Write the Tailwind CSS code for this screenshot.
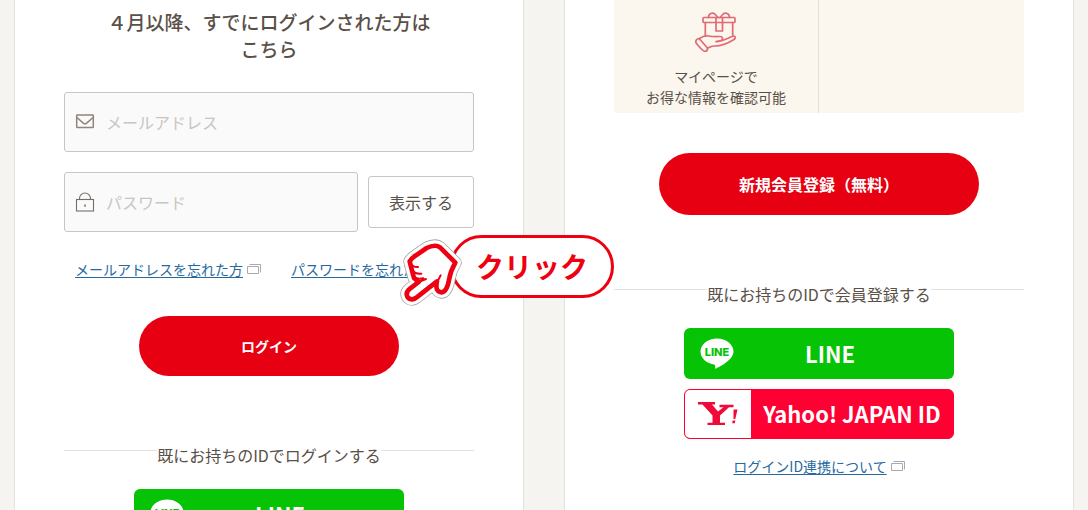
<!DOCTYPE html>
<html lang="ja">
<head>
  <meta charset="UTF-8" />
  <meta name="viewport" content="width=device-width, initial-scale=1.0" />
  <title>ログイン・新規会員登録</title>
  <script src="https://cdn.jsdelivr.net/npm/@tailwindcss/browser@4"></script>
</head>
<body class="relative h-screen overflow-hidden bg-[#f5f4f0] font-['Noto_Sans_CJK_JP',sans-serif] text-[#595048]">
  <main class="grid min-h-full grid-cols-2 gap-10 px-3.5">

    <!-- Login -->
    <section class="border-x border-[#e3e2dc] bg-white px-[49px] pt-2">
      <h1 class="text-center text-[19px] leading-[27px] font-medium">４月以降、すでにログインされた方は<br />こちら</h1>

      <form class="mt-[30px]">
        <label class="flex h-[60px] items-center gap-[11px] rounded-[3px] border border-[#c6c6c6] bg-[#fafafa] px-2.5">
          <svg class="h-5 w-5 shrink-0" viewBox="0 0 20 20" fill="none" stroke="#8f857e" stroke-width="1.5" aria-hidden="true">
            <rect x="1.700" y="3" width="16.600" height="12.600" rx=".5" />
            <path d="M2 5.500l6.300 5.600q1.700 1.400 3.400 0L18 5.500" />
          </svg>
          <input type="email" aria-label="メールアドレス" placeholder="メールアドレス" class="w-full min-w-0 bg-transparent text-base placeholder:text-[#c8c5c1] focus:outline-none" />
        </label>

        <div class="mt-5 flex items-center gap-2.5">
          <label class="flex h-[60px] min-w-0 flex-1 items-center gap-[11px] rounded-[3px] border border-[#c6c6c6] bg-[#fafafa] px-2.5">
            <svg class="h-5 w-5 shrink-0" viewBox="0 0 20 20" fill="none" stroke="#766d67" stroke-width="1.1" aria-hidden="true">
              <rect x="1.5" y="7.5" width="17" height="11.5" />
              <path d="M4.500 7.500V6.500a5.500 5.500 0 0 1 11 0v1" />
              <path d="M10 12.500v2.200" stroke-width="1.500" />
            </svg>
            <input type="password" aria-label="パスワード" placeholder="パスワード" class="w-full min-w-0 bg-transparent text-base placeholder:text-[#c8c5c1] focus:outline-none" />
          </label>
          <button type="button" class="h-[52px] w-[106px] rounded-[3px] border border-[#c6c6c6] bg-white text-base">表示する</button>
        </div>

        <div class="mt-[27px] flex gap-[30px] px-[11px] text-sm leading-5 whitespace-nowrap text-[#27699f]">
          <span class="flex items-center gap-1">
            <a href="#" class="underline underline-offset-2">メールアドレスを忘れた方</a>
            <svg class="h-3 w-3.5" viewBox="0 0 14 12" fill="none" stroke="#a9a9b5" aria-hidden="true"><path d="M.5 3.500h11v7H.5zM2.500 1.500h11v8" /></svg>
          </span>
          <a href="#" class="underline underline-offset-2">パスワードを忘れた方</a>
        </div>

        <button type="button" class="mx-auto mt-[37px] block h-[60px] w-[260px] rounded-full bg-[#e60012] text-sm font-bold text-white">ログイン</button>
      </form>

      <h2 class="mt-[74px] flex justify-center border-t border-[#e3e2dc] text-base leading-6">
        <span class="-mt-2 bg-white">既にお持ちのIDでログインする</span>
      </h2>
      <button type="button" class="mx-auto mt-[22px] flex h-[51px] w-[270px] items-center rounded-md bg-[#06c305] pl-4 text-white">
        <svg class="h-8 w-[34px]" viewBox="0 0 34 32" aria-hidden="true">
          <path d="M17 .5C8 .5.5 6.300.5 13.600c0 6.500 5.500 11.700 13.500 12.900 1.600.3 1.300 1.500 1 4.500 3-1.300 18.500-8.500 18.500-17.400C33.500 6.300 26 .5 17 .5z" fill="#fff" />
          <text x="17" y="18" text-anchor="middle" font-family="Inter, sans-serif" font-size="11" font-weight="800" fill="#06c305">LINE</text>
        </svg>
        <span class="flex-1 pr-7 text-center text-[22px] font-bold">LINE</span>
      </button>
    </section>

    <!-- Registration -->
    <section class="border-x border-[#e3e2dc] bg-white px-[49px]">
      <div class="grid h-[113px] grid-cols-2 rounded-b-[4px] bg-[#fbf6ee]">
        <div class="border-r border-[#e3e0d9] pt-2.5 text-center">
          <svg class="mx-auto h-[42px] w-11" viewBox="0 0 44 42" fill="none" stroke="#e26a74" stroke-width="1.7" stroke-linejoin="round" stroke-linecap="round" aria-hidden="true">
            <rect x="9" y="7.500" width="32" height="5" rx="1" />
            <path d="M11.300 12.500V26M38.700 12.500V25M22 7.500V21h6.500V7.500" />
            <path d="M14.500 7.500c0-4 4-5.500 6.500-3.300L24 7.500M35.500 7.500c0-4-4-5.500-6.500-3.300L26 7.500" />
            <path d="M5.500 28.500c3.500-2.500 6-3 9-2.500 4 .7 7 .6 11.500.5 3 0 3.500 3 1 4l-5 1.200c7-.2 12-3.700 16-5.200 3-1 4.500 1 2 3-8 5-14 6.500-19 6.500-4 0-4.500 1-7.500 2.300" />
            <path d="M2 30.500c1-2 2.800-2.300 4-1l7 8c1.500 2-.5 4.500-3 3.500-2-1-5.500-5-7.500-7.500-.8-1-.9-2-.5-3z" />
          </svg>
          <p class="mt-3.5 text-sm leading-[21px]">マイページで<br />お得な情報を確認可能</p>
        </div>
      </div>

      <button type="button" class="mx-auto mt-10 block h-[62px] w-[320px] rounded-full bg-[#e60012] text-base font-bold text-white">新規会員登録（無料）</button>

      <h2 class="mt-[74px] flex justify-center border-t border-[#e3e2dc] text-base leading-6">
        <span class="-mt-2 bg-white">既にお持ちのIDで会員登録する</span>
      </h2>
      <button type="button" class="mx-auto mt-[22px] flex h-[51px] w-[270px] items-center rounded-md bg-[#06c305] pl-4 text-white">
        <svg class="h-8 w-[34px]" viewBox="0 0 34 32" aria-hidden="true">
          <path d="M17 .5C8 .5.5 6.300.5 13.600c0 6.500 5.500 11.700 13.500 12.900 1.600.3 1.300 1.500 1 4.500 3-1.300 18.500-8.500 18.500-17.400C33.500 6.300 26 .5 17 .5z" fill="#fff" />
          <text x="17" y="18" text-anchor="middle" font-family="Inter, sans-serif" font-size="11" font-weight="800" fill="#06c305">LINE</text>
        </svg>
        <span class="flex-1 pr-7 text-center text-[22px] font-bold">LINE</span>
      </button>
      <button type="button" class="mx-auto mt-2.5 flex h-[50px] w-[270px] items-stretch overflow-hidden rounded-md border border-[#ff0033] bg-[#ff0033] text-white">
        <span class="flex w-[66px] items-center justify-center bg-white">
          <svg class="h-6 w-10" viewBox="0 0 40 24" fill="#f10a38" aria-hidden="true">
            <path d="M0 0h17v2.500h-3l6 7 5.500-4.300h-4V2.700h14v2.500h-4.500L22 13.500v7.200h5V23H9.500v-2.300h5v-7.200L4.500 2.500H0z" />
            <path d="M35.500 7.500h4l-2.200 9.500h-1.800zM34.700 18.500h2.600l-.5 2.800h-2.600z" />
          </svg>
        </span>
        <span class="flex flex-1 items-center justify-center pb-0.5 text-[22px] font-bold">Yahoo! JAPAN ID</span>
      </button>

      <p class="mt-[17px] flex items-center justify-center gap-1 text-sm leading-5 text-[#27699f]">
        <a href="#" class="underline underline-offset-2">ログインID連携について</a>
        <svg class="h-3 w-3.5" viewBox="0 0 14 12" fill="none" stroke="#a9a9b5" aria-hidden="true"><path d="M.5 3.500h11v7H.5zM2.500 1.500h11v8" /></svg>
      </p>
    </section>
  </main>

  <!-- Click callout -->
  <div class="absolute top-[235px] left-[400px] flex">
    <div class="ml-[50px] flex h-[63px] w-[164px] items-center justify-center rounded-full border-[3px] border-[#ee0011] bg-white pb-0.5 text-[28px] font-bold text-[#ee0011]">クリック</div>
    <svg class="absolute top-0 left-0 h-[75px] w-[65px]" viewBox="6 3 195 225" fill="#fff" stroke-linejoin="round" stroke-linecap="round" aria-hidden="true">
      <defs>
        <path id="hand" d="M35 82Q40 73 54 64L86 42Q112 29 127 41L172 86Q157 112 153 138Q146 175 130 175Q110 173 117 142L56 190Q40 202 29 190Q21 176 36 164L62 144L48 132L42 110Z" />
      </defs>
      <use href="#hand" stroke="#a8a8a8" stroke-width="38" />
      <use href="#hand" stroke="#fff" stroke-width="33" />
      <use href="#hand" stroke="#ee0011" stroke-width="14" />
      <path d="M38 88Q44 100 60 99M44 110Q54 122 70 119M52 131Q62 137 76 133M62 144L84 135M114 146Q122 138 128 124" fill="none" stroke="#ee0011" stroke-width="6" />
    </svg>
  </div>
</body>
</html>
